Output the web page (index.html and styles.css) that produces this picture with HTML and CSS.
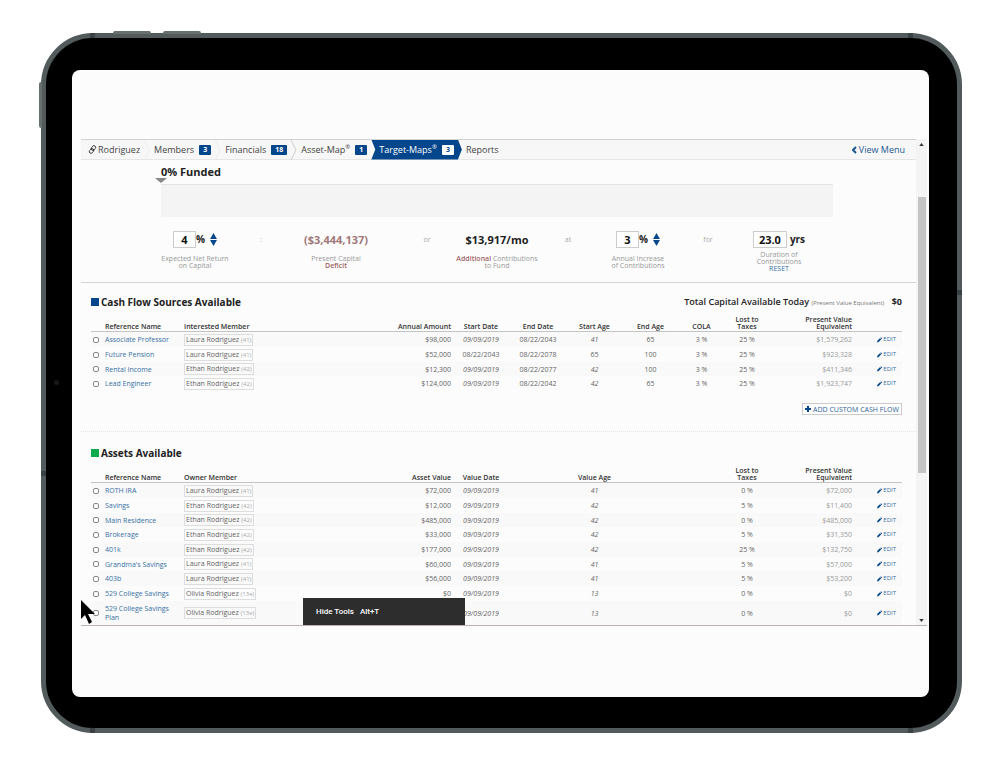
FILE: index.html
```html
<!DOCTYPE html>
<html lang="en">
<head>
  <meta charset="UTF-8">
  <meta name="viewport" content="width=device-width, initial-scale=1.0">
  <title>Target-Maps</title>
  <link rel="stylesheet" href="styles.css">
</head>
<body>
  <svg class="symbols" aria-hidden="true">
    <symbol id="pencil" viewBox="0 0 12 12"><path d="M0 12l1-4 6-6 3 3-6 6zM8 1l1-1h1l2 2v1l-1 1z"/></symbol>
    <symbol id="chevron" viewBox="0 0 6 20"><path d="M0 0l5 10-5 10" fill="none" stroke="currentColor"/></symbol>
  </svg>

  <div class="device">
    <span class="key key-up"></span>
    <span class="key key-down"></span>
    <span class="key key-power"></span>
    <span class="band band-tl"></span>
    <span class="band band-tr"></span>
    <span class="band band-bl"></span>
    <span class="band band-br"></span>
    <span class="band band-left"></span>
    <span class="band band-right"></span>
    <span class="camera"></span>

    <div class="screen">
      <div class="app">
        <div class="page">
          <nav class="crumbs">
            <a class="crumb" href="#">
              <svg class="link-icon" viewBox="0 0 16 16"><g fill="none" stroke="#222" stroke-width="1.5"><rect x="7" y="1" width="6" height="9" rx="3" transform="rotate(40 10 5)"/><rect x="3" y="6" width="6" height="9" rx="3" transform="rotate(40 6 11)"/></g></svg>
              Rodriguez
            </a>
            <svg class="chevron faint"><use href="#chevron"/></svg>
            <a class="crumb" href="#">Members <span class="badge">3</span></a>
            <svg class="chevron faint"><use href="#chevron"/></svg>
            <a class="crumb" href="#">Financials <span class="badge">18</span></a>
            <svg class="chevron"><use href="#chevron"/></svg>
            <a class="crumb" href="#"><span>Asset-Map<sup>®</sup></span> <span class="badge">1</span></a>
            <a class="crumb active" href="#"><span>Target-Maps<sup>®</sup></span> <span class="badge">3</span></a>
            <a class="crumb" href="#">Reports</a>
            <a class="view-menu" href="#"><svg viewBox="0 0 5 8"><path d="M4 1L1 4l3 3" fill="none" stroke="currentColor" stroke-width="2"/></svg>View Menu</a>
          </nav>

          <section class="funding">
            <h1>0% Funded</h1>
            <div class="marker"></div>
            <div class="bar"></div>
          </section>

          <section class="metrics">
            <div class="metric">
              <div class="value"><input type="text" value="4" id="netReturn"><span>%</span>
                <span class="spin"><button aria-label="Increase return"><svg viewBox="0 0 8 7"><path d="M4 0l4 7H0z"/></svg></button><button aria-label="Decrease return"><svg viewBox="0 0 8 7"><path d="M0 0h8L4 7z"/></svg></button></span>
              </div>
              <label for="netReturn">Expected Net Return<br>on Capital</label>
            </div>
            <span class="word">:</span>
            <div class="metric">
              <div class="value deficit">($3,444,137)</div>
              <p>Present Capital<br><b>Deficit</b></p>
            </div>
            <span class="word">or</span>
            <div class="metric">
              <div class="value">$13,917/mo</div>
              <p><b>Additional</b> Contributions<br>to Fund</p>
            </div>
            <span class="word">at</span>
            <div class="metric">
              <div class="value"><input type="text" value="3" id="increase"><span>%</span>
                <span class="spin"><button aria-label="Increase contributions"><svg viewBox="0 0 8 7"><path d="M4 0l4 7H0z"/></svg></button><button aria-label="Decrease contributions"><svg viewBox="0 0 8 7"><path d="M0 0h8L4 7z"/></svg></button></span>
              </div>
              <label for="increase">Annual Increase<br>of Contributions</label>
            </div>
            <span class="word">for</span>
            <div class="metric duration">
              <div class="value"><input type="text" value="23.0" id="duration"><span>yrs</span></div>
              <label for="duration">Duration of<br>Contributions</label>
              <a href="#">RESET</a>
            </div>
          </section>

          <section class="sources">
            <header>
              <h2 class="cash">Cash Flow Sources Available</h2>
              <div class="total"><strong>Total Capital Available Today</strong> <small>(Present Value Equivalent)</small> <strong class="amount">$0</strong></div>
            </header>
            <table>
              <colgroup><col class="c-check"><col class="c-name"><col class="c-member"><col class="c-amount"><col class="c-start"><col class="c-end"><col class="c-startage"><col class="c-endage"><col class="c-cola"><col class="c-lost"><col class="c-pv"><col class="c-edit"></colgroup>
              <thead>
                <tr><th></th><th class="left">Reference Name</th><th class="left">Interested Member</th><th class="right">Annual Amount</th><th>Start Date</th><th>End Date</th><th>Start Age</th><th>End Age</th><th>COLA</th><th>Lost to<br>Taxes</th><th class="right">Present Value<br>Equivalent</th><th></th></tr>
              </thead>
              <tbody>
                <tr><td><input type="checkbox" aria-label="Associate Professor"></td><td class="left"><a href="#">Associate Professor</a></td><td class="left"><span class="member">Laura Rodriguez <i>(41)</i></span></td><td class="right">$98,000</td><td><em>09/09/2019</em></td><td>08/22/2043</td><td><em>41</em></td><td>65</td><td>3 %</td><td>25 %</td><td class="right pv">$1,579,262</td><td class="edit"><a href="#"><svg><use href="#pencil"/></svg>EDIT</a></td></tr>
                <tr><td><input type="checkbox" aria-label="Future Pension"></td><td class="left"><a href="#">Future Pension</a></td><td class="left"><span class="member">Laura Rodriguez <i>(41)</i></span></td><td class="right">$52,000</td><td>08/22/2043</td><td>08/22/2078</td><td>65</td><td>100</td><td>3 %</td><td>25 %</td><td class="right pv">$923,328</td><td class="edit"><a href="#"><svg><use href="#pencil"/></svg>EDIT</a></td></tr>
                <tr><td><input type="checkbox" aria-label="Rental Income"></td><td class="left"><a href="#">Rental Income</a></td><td class="left"><span class="member">Ethan Rodriguez <i>(42)</i></span></td><td class="right">$12,300</td><td><em>09/09/2019</em></td><td>08/22/2077</td><td><em>42</em></td><td>100</td><td>3 %</td><td>25 %</td><td class="right pv">$411,346</td><td class="edit"><a href="#"><svg><use href="#pencil"/></svg>EDIT</a></td></tr>
                <tr><td><input type="checkbox" aria-label="Lead Engineer"></td><td class="left"><a href="#">Lead Engineer</a></td><td class="left"><span class="member">Ethan Rodriguez <i>(42)</i></span></td><td class="right">$124,000</td><td><em>09/09/2019</em></td><td>08/22/2042</td><td><em>42</em></td><td>65</td><td>3 %</td><td>25 %</td><td class="right pv">$1,923,747</td><td class="edit"><a href="#"><svg><use href="#pencil"/></svg>EDIT</a></td></tr>
              </tbody>
            </table>
            <button class="add"><svg viewBox="0 0 6 6"><path d="M2 0h2v2h2v2H4v2H2V4H0V2h2z"/></svg>ADD CUSTOM CASH FLOW</button>
          </section>

          <section class="sources assets">
            <header>
              <h2 class="asset">Assets Available</h2>
            </header>
            <table>
              <colgroup><col class="c-check"><col class="c-name"><col class="c-member"><col class="c-amount"><col class="c-start"><col class="c-end"><col class="c-startage"><col class="c-endage"><col class="c-cola"><col class="c-lost"><col class="c-pv"><col class="c-edit"></colgroup>
              <thead>
                <tr><th></th><th class="left">Reference Name</th><th class="left">Owner Member</th><th class="right">Asset Value</th><th>Value Date</th><th></th><th>Value Age</th><th></th><th></th><th>Lost to<br>Taxes</th><th class="right">Present Value<br>Equivalent</th><th></th></tr>
              </thead>
              <tbody>
                <tr><td><input type="checkbox" aria-label="ROTH IRA"></td><td class="left"><a href="#">ROTH IRA</a></td><td class="left"><span class="member">Laura Rodriguez <i>(41)</i></span></td><td class="right">$72,000</td><td><em>09/09/2019</em></td><td></td><td><em>41</em></td><td></td><td></td><td>0 %</td><td class="right pv">$72,000</td><td class="edit"><a href="#"><svg><use href="#pencil"/></svg>EDIT</a></td></tr>
                <tr><td><input type="checkbox" aria-label="Savings"></td><td class="left"><a href="#">Savings</a></td><td class="left"><span class="member">Ethan Rodriguez <i>(42)</i></span></td><td class="right">$12,000</td><td><em>09/09/2019</em></td><td></td><td><em>42</em></td><td></td><td></td><td>5 %</td><td class="right pv">$11,400</td><td class="edit"><a href="#"><svg><use href="#pencil"/></svg>EDIT</a></td></tr>
                <tr><td><input type="checkbox" aria-label="Main Residence"></td><td class="left"><a href="#">Main Residence</a></td><td class="left"><span class="member">Ethan Rodriguez <i>(42)</i></span></td><td class="right">$485,000</td><td><em>09/09/2019</em></td><td></td><td><em>42</em></td><td></td><td></td><td>0 %</td><td class="right pv">$485,000</td><td class="edit"><a href="#"><svg><use href="#pencil"/></svg>EDIT</a></td></tr>
                <tr><td><input type="checkbox" aria-label="Brokerage"></td><td class="left"><a href="#">Brokerage</a></td><td class="left"><span class="member">Ethan Rodriguez <i>(42)</i></span></td><td class="right">$33,000</td><td><em>09/09/2019</em></td><td></td><td><em>42</em></td><td></td><td></td><td>5 %</td><td class="right pv">$31,350</td><td class="edit"><a href="#"><svg><use href="#pencil"/></svg>EDIT</a></td></tr>
                <tr><td><input type="checkbox" aria-label="401k"></td><td class="left"><a href="#">401k</a></td><td class="left"><span class="member">Ethan Rodriguez <i>(42)</i></span></td><td class="right">$177,000</td><td><em>09/09/2019</em></td><td></td><td><em>42</em></td><td></td><td></td><td>25 %</td><td class="right pv">$132,750</td><td class="edit"><a href="#"><svg><use href="#pencil"/></svg>EDIT</a></td></tr>
                <tr><td><input type="checkbox" aria-label="Grandma's Savings"></td><td class="left"><a href="#">Grandma's Savings</a></td><td class="left"><span class="member">Laura Rodriguez <i>(41)</i></span></td><td class="right">$60,000</td><td><em>09/09/2019</em></td><td></td><td><em>41</em></td><td></td><td></td><td>5 %</td><td class="right pv">$57,000</td><td class="edit"><a href="#"><svg><use href="#pencil"/></svg>EDIT</a></td></tr>
                <tr><td><input type="checkbox" aria-label="403b"></td><td class="left"><a href="#">403b</a></td><td class="left"><span class="member">Laura Rodriguez <i>(41)</i></span></td><td class="right">$56,000</td><td><em>09/09/2019</em></td><td></td><td><em>41</em></td><td></td><td></td><td>5 %</td><td class="right pv">$53,200</td><td class="edit"><a href="#"><svg><use href="#pencil"/></svg>EDIT</a></td></tr>
                <tr><td><input type="checkbox" aria-label="529 College Savings"></td><td class="left"><a href="#">529 College Savings</a></td><td class="left"><span class="member">Olivia Rodriguez <i>(13e)</i></span></td><td class="right">$0</td><td><em>09/09/2019</em></td><td></td><td><em>13</em></td><td></td><td></td><td>0 %</td><td class="right pv">$0</td><td class="edit"><a href="#"><svg><use href="#pencil"/></svg>EDIT</a></td></tr>
                <tr class="tall"><td><input type="checkbox" aria-label="529 College Savings Plan"></td><td class="left"><a href="#">529 College Savings<br>Plan</a></td><td class="left"><span class="member">Olivia Rodriguez <i>(13e)</i></span></td><td></td><td><em>09/09/2019</em></td><td></td><td><em>13</em></td><td></td><td></td><td>0 %</td><td class="right pv">$0</td><td class="edit"><a href="#"><svg><use href="#pencil"/></svg>EDIT</a></td></tr>
              </tbody>
            </table>
          </section>
        </div>

        <div class="scrollbar">
          <svg viewBox="0 0 6 4"><path d="M3 0l3 4H0z"/></svg>
          <div class="track"><div class="thumb"></div></div>
          <svg viewBox="0 0 6 4"><path d="M0 0h6L3 4z"/></svg>
        </div>

        <div class="tools"><span>Hide Tools</span><span>Alt+T</span></div>
        <svg class="cursor" viewBox="0 0 14 24"><path d="M0 0v19l4-4 4 9 3-2-4-8h7z"/></svg>
      </div>
    </div>
  </div>
</body>
</html>
```
FILE: styles.css
```css
* {
  box-sizing: border-box;
}

body {
  margin: 0;
  padding: 33px 38px 44px 41px;
  background: #fff;
  color: #333;
  font-family: "Open Sans", "Noto Sans", sans-serif;
  font-size: 7px;
  line-height: 9px;
}

a {
  color: #3670a4;
  text-decoration: none;
}

h1, h2, p {
  margin: 0;
}

input, button {
  font-family: inherit;
  color: inherit;
  margin: 0;
}

svg {
  flex: none;
  fill: currentColor;
}

.symbols {
  position: absolute;
  width: 0;
  height: 0;
}

/* tablet frame */
.device {
  position: relative;
  padding: 32px 28px 31px 26px;
  background: #000;
  border: 5px solid #525a5b;
  border-radius: 52px;
}

.key {
  position: absolute;
  background: #66716f;
}

.key-up, .key-down {
  top: -7px;
  width: 38px;
  height: 3px;
  border-radius: 2px 2px 0 0;
}

.key-up {
  left: 67px;
}

.key-down {
  left: 117px;
}

.key-power {
  left: -7px;
  top: 44px;
  width: 3px;
  height: 46px;
  border-radius: 2px 0 0 2px;
}

.band {
  position: absolute;
  width: 5px;
  height: 5px;
  background: #3a4142;
}

.band-tl {
  left: 44px;
  top: -5px;
}

.band-tr {
  right: 44px;
  top: -5px;
}

.band-bl {
  left: 44px;
  bottom: -5px;
}

.band-br {
  right: 44px;
  bottom: -5px;
}

.band-left {
  left: -5px;
  bottom: 252px;
}

.band-right {
  right: -5px;
  top: 252px;
}

.camera {
  position: absolute;
  left: 8px;
  top: 342px;
  width: 5px;
  height: 5px;
  border-radius: 50%;
  background: #151719;
}

.screen {
  padding: 69px 2px 71px 9px;
  background: #fcfcfc;
  border-radius: 8px;
}

.app {
  position: relative;
  display: flex;
  border-bottom: 1px solid #bbb3b3;
}

.page {
  flex: 1;
  min-width: 0;
  border-top: 1px solid #d2d2d2;
}

/* breadcrumb bar */
.crumbs {
  display: flex;
  align-items: center;
  height: 20px;
  padding: 0 11px 0 3px;
  background: #f7f7f7;
  border-bottom: 1px solid #e6e6e6;
  font-size: 9px;
}

.crumb {
  display: flex;
  align-items: center;
  gap: 5px;
  height: 20px;
  padding: 0 4px;
  color: #444;
  white-space: nowrap;
}

.crumb sup {
  font-size: 6px;
  line-height: 0;
}

.link-icon {
  width: 9px;
  height: 9px;
  margin-right: -4px;
}

.badge {
  padding: 0 4px;
  border-radius: 1px;
  background: #04468c;
  color: #fff;
  font-size: 7px;
  font-weight: bold;
  line-height: 10px;
}

.crumb.active {
  padding: 0 8px;
  background: #04468c;
  color: #fff;
  clip-path: polygon(0 0, calc(100% - 4px) 0, 100% 50%, calc(100% - 4px) 100%, 0 100%, 4px 50%);
}

.active .badge {
  background: #fff;
  color: #04468c;
}

.chevron {
  width: 6px;
  height: 20px;
  color: #ccc;
}

.chevron.faint {
  color: #ececec;
}

.view-menu {
  display: flex;
  align-items: center;
  gap: 2px;
  margin-left: auto;
  color: #1b5791;
}

.view-menu svg {
  width: 5px;
  height: 8px;
}

/* funding gauge */
.funding {
  padding: 5px 83px 0 80px;
}

.funding h1 {
  font-size: 11px;
  line-height: 13px;
  color: #222;
}

.marker {
  width: 12px;
  height: 5px;
  margin: 0 0 1px -6px;
  background: #888;
  clip-path: polygon(0 0, 100% 0, 50% 100%);
}

.bar {
  height: 33px;
  background: #f4f4f4;
  border-top: 1px solid #e4e4e4;
}

/* key numbers */
.metrics {
  display: grid;
  grid-template-columns: 106fr 26fr 124fr 58fr 82fr 60fr 80fr 60fr 82fr;
  height: 66px;
  padding: 14px 96px 0 61px;
  border-bottom: 1px solid #d4d4d4;
  text-align: center;
  color: #999;
}

.metric {
  display: flex;
  flex-direction: column;
  align-items: center;
  line-height: 7px;
  white-space: nowrap;
}

.metric b {
  font-weight: 600;
  color: #a06464;
}

.value {
  display: flex;
  align-items: center;
  height: 17px;
  margin-bottom: 7px;
  color: #222;
  font-size: 11px;
  font-weight: bold;
}

.value input {
  width: 23px;
  height: 17px;
  padding: 0;
  border: 1px solid #ccc;
  background: #fff;
  color: #111;
  font-size: 11px;
  font-weight: bold;
  text-align: center;
}

.value span {
  font-size: 10px;
}

.deficit {
  color: #a07878;
}

.spin {
  display: flex;
  flex-direction: column;
  gap: 1px;
  margin-left: 5px;
  color: #04468c;
}

.spin button {
  display: flex;
  padding: 0;
  border: none;
  background: none;
}

.spin svg {
  width: 7px;
  height: 6px;
}

.duration .value {
  gap: 3px;
  margin-bottom: 3px;
}

.duration input {
  width: 34px;
}

.word {
  line-height: 17px;
  color: #aaa;
}

/* source tables */
.sources {
  padding: 12px 14px 16px 10px;
}

.sources header {
  display: flex;
  align-items: center;
  justify-content: space-between;
  height: 14px;
}

.sources h2 {
  display: flex;
  align-items: center;
  gap: 2px;
  color: #222;
  font-size: 10px;
}

.sources h2::before {
  content: "";
  width: 8px;
  height: 8px;
  background: #04468c;
}

.sources h2.asset::before {
  background: #0cab4c;
}

.total {
  font-size: 9px;
  color: #222;
}

.total strong {
  font-weight: 600;
}

.total small {
  font-size: 6px;
  color: #777;
}

.total .amount {
  margin-left: 5px;
  font-weight: bold;
}

table {
  width: 100%;
  margin-top: 6px;
  table-layout: fixed;
  border-collapse: separate;
  border-spacing: 0;
}

.c-check { width: 14px; }
.c-name { width: 79px; }
.c-member { width: 191px; }
.c-amount { width: 76px; }
.c-start { width: 60px; }
.c-end { width: 54px; }
.c-startage { width: 59px; }
.c-endage { width: 53px; }
.c-cola { width: 49px; }
.c-lost { width: 42px; }
.c-pv { width: 84px; }
.c-edit { width: 50px; }

th, td {
  padding: 0;
  text-align: center;
  white-space: nowrap;
}

th {
  height: 17px;
  padding-bottom: 1px;
  border-bottom: 1px solid #c4c4c4;
  vertical-align: bottom;
  font-weight: 600;
  line-height: 7px;
}

td {
  height: 15px;
  color: #666;
}

tr:nth-child(3n) td {
  height: 14px;
}

tbody tr.tall td {
  height: 24px;
}

tbody tr:nth-child(odd) td {
  background: #f9f9f9;
}

.left {
  text-align: left;
}

.right {
  text-align: right;
}

td.pv {
  color: #999;
}

td input {
  display: block;
  appearance: none;
  width: 6px;
  height: 6px;
  margin-left: 2px;
  border: 1px solid #888;
  border-radius: 2px;
  background: #fff;
}

.member {
  display: inline-block;
  padding: 0 1px;
  border: 1px solid #ddd;
}

.member i {
  font-size: 6px;
  font-style: normal;
  color: #aaa;
}

.edit a {
  display: flex;
  align-items: center;
  justify-content: flex-end;
  gap: 1px;
  padding-right: 6px;
  font-size: 6px;
}

.edit svg {
  width: 5px;
  height: 6px;
  color: #04468c;
}

.add {
  display: flex;
  align-items: center;
  gap: 2px;
  height: 12px;
  margin: 12px 0 0 auto;
  padding: 0 2px;
  border: 1px solid #ccc;
  background: #fff;
  color: #2a6296;
  font-size: 7px;
  white-space: nowrap;
}

.add svg {
  width: 6px;
  height: 6px;
  color: #04468c;
}

.assets {
  padding-top: 14px;
  padding-bottom: 0;
  border-top: 1px dotted #e4e4e4;
}

/* scrollbar */
.scrollbar {
  display: flex;
  flex-direction: column;
  align-items: center;
  width: 11px;
  padding: 4px 0 3px;
  background: #f4f4f4;
}

.scrollbar svg {
  width: 5px;
  height: 3px;
}

.track {
  flex: 1;
  width: 8px;
  padding: 51px 0 146px;
}

.thumb {
  height: 100%;
  background: #c4c4c4;
}

/* overlays */
.tools {
  position: absolute;
  left: 222px;
  bottom: 0;
  display: flex;
  align-items: center;
  gap: 6px;
  width: 162px;
  height: 27px;
  padding: 0 13px;
  background: #2d2d2d;
  color: #fff;
  font-family: Roboto, sans-serif;
  font-size: 8px;
  font-weight: 500;
}

.cursor {
  position: absolute;
  left: 0;
  bottom: 1px;
  width: 14px;
  height: 24px;
  fill: #000;
}
```
